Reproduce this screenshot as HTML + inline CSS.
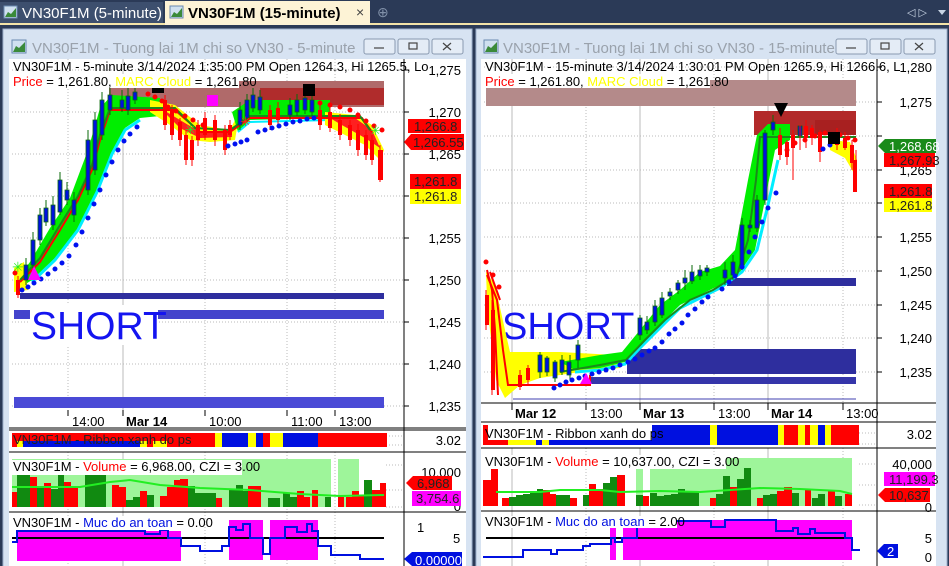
<!DOCTYPE html>
<html><head><meta charset="utf-8"><style>
html,body{margin:0;padding:0;width:949px;height:566px;overflow:hidden;background:#2b3a57}
svg{display:block}
text{font-family:"Liberation Sans",sans-serif;font-size:13px;fill:#000}
</style></head><body>
<svg width="949" height="566" viewBox="0 0 949 566" xmlns="http://www.w3.org/2000/svg">
<!-- tab bar -->
<rect x="0" y="0" width="949" height="29" fill="#2b3a57"/>
<rect x="0" y="23" width="949" height="2" fill="#f3e3a8"/>
<rect x="0" y="2" width="163" height="21" fill="#3d4f6e"/>
<rect x="165" y="1" width="205" height="24" fill="#fdf3d6"/>
<g><rect x="4" y="6" width="13" height="12" fill="#cfe0f0" stroke="#6a8ab0"/><path d="M5 17 L8 12 L11 14 L16 8 V17Z" fill="#3a8a3a"/></g>
<text x="22" y="18" style="font-size:15px;fill:#fff">VN30F1M (5-minute)</text>
<g><rect x="170" y="6" width="13" height="12" fill="#cfe0f0" stroke="#6a8ab0"/><path d="M171 17 L174 12 L177 14 L182 8 V17Z" fill="#3a8a3a"/></g>
<text x="188" y="18" style="font-size:15px;font-weight:bold">VN30F1M (15-minute)</text>
<text x="356" y="17" style="font-size:14px;fill:#444">×</text>
<text x="377" y="17" style="font-size:14px;fill:#8090a8">⊕</text>
<text x="907" y="16" style="font-size:11px;fill:#c8d4e4">◁ ▷</text>
<path d="M938 10 h8 l-4 5z" fill="#c8d4e4"/>

<!-- windows -->
<rect x="3" y="29" width="469" height="540" fill="#d7e3f2" stroke="#9fb2cc"/>
<rect x="476" y="29" width="471" height="540" fill="#d7e3f2" stroke="#9fb2cc"/>
<g><rect x="12" y="40" width="14" height="13" fill="#cfe0f0" stroke="#6a8ab0"/><path d="M13 52 L16 46 L19 48 L25 42 V52Z" fill="#3a8a3a"/></g>
<text x="32" y="53" style="font-size:15px;fill:#9aa2ac">VN30F1M - Tuong lai 1M chi so VN30 - 5-minute</text>
<g><rect x="484" y="40" width="14" height="13" fill="#cfe0f0" stroke="#6a8ab0"/><path d="M485 52 L488 46 L491 48 L497 42 V52Z" fill="#3a8a3a"/></g>
<text x="503" y="53" style="font-size:15px;fill:#9aa2ac">VN30F1M - Tuong lai 1M chi so VN30 - 15-minute</text>
<g fill="#e4ecf6" stroke="#8a9ab0">
<rect x="364" y="39" width="31" height="15" rx="2"/><rect x="398" y="39" width="31" height="15" rx="2"/><rect x="432" y="39" width="31" height="15" rx="2"/>
<rect x="836" y="39" width="31" height="15" rx="2"/><rect x="870" y="39" width="31" height="15" rx="2"/><rect x="904" y="39" width="31" height="15" rx="2"/>
</g>
<g stroke="#444" fill="none" stroke-width="1.2">
<path d="M374 48 h10"/><rect x="409" y="43" width="8" height="6"/><path d="M443 43 l8 7 M451 43 l-8 7"/>
<path d="M846 48 h10"/><rect x="881" y="43" width="8" height="6"/><path d="M915 43 l8 7 M923 43 l-8 7"/>
</g>

<!-- ===== LEFT CHART ===== -->
<rect x="9" y="59" width="457" height="507" fill="#fff"/>
<g stroke="#bbb" stroke-dasharray="1,2">
<path d="M12 70H404 M12 112H404 M12 154H404 M12 196H404 M12 238H404 M12 280H404 M12 322H404 M12 364H404 M12 406H404"/>
<path d="M68 59V410 M205 59V410 M287 59V410 M335 59V410"/>
<path d="M68 452V566 M205 452V566 M287 452V566 M335 452V566 M386 465H404 M386 490H404 M386 507H404 M386 436H404 M386 445H404"/>
</g>
<path d="M123 59V410 M123 452V566" stroke="#bbb"/>
<rect x="109" y="81" width="275" height="26" fill="#b06a6a"/>
<rect x="260" y="88" width="124" height="17" fill="#b02c2c"/>
<rect x="20" y="293" width="364" height="6" fill="#2e2e9e"/>
<rect x="14" y="310" width="370" height="9" fill="#4444cc"/>
<rect x="14" y="397" width="370" height="11" fill="#4a4ad6"/>
<rect x="30" y="305" width="128" height="40" fill="#fff"/>
<text x="31" y="339" style="font-size:39px;fill:#1414f0">SHORT</text>
<!-- clouds -->
<polygon points="14,283 30,262 50,228 70,198 88,150 100,108 112,95 160,98 160,116 140,118 125,128 112,152 97,190 78,228 55,258 32,280 16,290" fill="#00ee00"/>
<polyline points="32,282 55,260 78,230 97,192 112,154 125,130 140,120" fill="none" stroke="#00eeff" stroke-width="3"/>
<polygon points="150,100 175,105 200,125 230,130 240,110 235,140 210,142 190,140 170,125 150,112" fill="#ffff00"/>
<polygon points="160,108 180,120 200,132 232,132 232,137 200,138 180,128" fill="#ff2020"/>
<polygon points="232,112 250,100 330,100 330,118 250,120 238,132" fill="#00ee00"/>
<polyline points="238,132 250,122 330,120" fill="none" stroke="#00eeff" stroke-width="2"/>
<polygon points="325,112 355,115 372,125 384,150 380,160 365,145 345,135 325,125" fill="#ffff00"/>
<polygon points="325,115 355,118 372,130 380,148 365,138 340,124" fill="#ff2020"/>
<polygon points="14,268 24,262 28,290 14,292" fill="#ffff00"/>
<!-- MA lines -->
<polyline points="20,282 40,262 60,230 78,200 92,170 100,140 110,110 175,110 200,132 230,132 250,118 362,118 372,132" fill="none" stroke="#ff0000" stroke-width="2"/>
<polyline points="20,280 40,258 60,225 78,196 92,165 100,135 110,108 175,108 195,128 230,130 250,116 360,116 370,130" fill="none" stroke="#1a8a1a" stroke-width="2"/>
<!-- wicks -->
<g stroke="#0a6a0a"><path d="M26 258V285 M33 232V268 M40 208V245 M46 200V226 M53 196V230 M60 172V215 M67 182V205 M74 192V222 M88 130V195 M95 112V175 M102 92V140 M110 88V115 M122 90V112 M128 86V115 M135 86V104 M240 102V130 M247 94V122 M253 88V112 M260 90V114 M290 98V120 M297 94V116 M305 86V114 M312 92V116"/></g>
<g stroke="#ff0000"><path d="M18 276V298 M165 95V130 M172 105V140 M180 118V146 M186 130V165 M192 136V166 M198 120V146 M205 112V140 M215 115V146 M225 125V155 M230 120V140 M270 105V130 M278 102V126 M320 104V130 M330 106V132 M340 114V140 M350 120V146 M358 124V156 M366 130V160 M372 135V165 M380 145V182"/></g>
<path d="M24 265h4v15h-4z M31 240h4v25h-4z M38 215h4v25h-4z M44 208h4v14h-4z M51 205h4v20h-4z M58 180h4v32h-4z M65 190h4v10h-4z M72 200h4v15h-4z M86 140h4v50h-4z M93 120h4v50h-4z M100 100h4v35h-4z M108 95h4v15h-4z M120 100h4v8h-4z M126 96h4v14h-4z M133 92h4v8h-4z M238 110h4v15h-4z M245 100h4v18h-4z M251 95h4v13h-4z M258 97h4v13h-4z M288 105h4v10h-4z M295 100h4v12h-4z M303 98h4v12h-4z M310 100h4v12h-4z" fill="#0010e0" stroke="#0a6a0a" stroke-width="0.8"/>
<path d="M16 280h4v15h-4z M163 100h4v25h-4z M170 110h4v25h-4z M178 122h4v18h-4z M184 135h4v25h-4z M190 140h4v20h-4z M196 125h4v15h-4z M203 118h4v17h-4z M213 120h4v20h-4z M223 130h4v20h-4z M228 125h4v10h-4z M268 110h4v15h-4z M276 108h4v12h-4z M318 110h4v15h-4z M328 112h4v16h-4z M338 120h4v15h-4z M348 125h4v15h-4z M356 130h4v20h-4z M364 135h4v20h-4z M370 140h4v20h-4z M378 150h5v30h-5z" fill="#ff0000"/>
<!-- SAR dots -->
<path d="M22 290h0 M28 287h0 M34 283h0 M41 279h0 M48 274h0 M55 269h0 M62 263h0 M69 256h0 M76 245h0 M82 232h0 M88 218h0 M94 204h0 M100 190h0 M106 175h0 M112 162h0 M118 150h0 M124 141h0 M130 134h0 M137 127h0 M228 146h0 M235 144h0 M241 142h0 M247 140h0 M258 132h0 M265 130h0 M272 128h0 M279 126h0 M286 124h0 M293 122h0 M300 121h0 M307 119h0 M314 118h0" stroke="#0010f0" stroke-width="5" stroke-linecap="round"/>
<path d="M15 273h0 M148 94h0 M155 97h0 M162 101h0 M168 107h0 M176 111h0 M185 116h0 M193 120h0 M203 125h0 M320 103h0 M330 105h0 M340 107h0 M350 110h0 M358 115h0 M366 121h0 M374 126h0 M382 130h0" stroke="#ff0000" stroke-width="5" stroke-linecap="round"/>
<rect x="152" y="84" width="12" height="9" fill="#000"/>
<rect x="303" y="84" width="12" height="12" fill="#000"/>
<rect x="207" y="95" width="11" height="11" fill="#ff00ff"/>
<polygon points="34,266 28,280 41,280" fill="#ff00ff"/>
<text x="12" y="272" style="font-size:14px;fill:#22ee22">✳</text>
<text x="185" y="134" style="font-size:13px;fill:#22ee22">✳</text>
<text x="240" y="126" style="font-size:13px;fill:#ff2020">✳</text>
<text x="370" y="135" style="font-size:13px;fill:#22ee22">✳</text>
<!-- header -->
<rect x="10" y="60" width="394" height="30" fill="#fff" opacity="0"/>
<text x="13" y="71">VN30F1M - 5-minute 3/14/2024 1:35:00 PM Open 1264.3, Hi 1265.5, Lo</text>
<rect x="12" y="74" width="227" height="14" fill="#fff"/>
<text x="13" y="86"><tspan fill="#ff0000">Price</tspan> = 1,261.80, <tspan fill="#ffff00">MARC Cloud</tspan> = 1,261.80</text>
<!-- axis -->
<path d="M404 59V566 M9 428H466 M9 430H466 M9 452H466 M9 512H466" stroke="#000"/>
<g stroke="#000"><path d="M404 70h5 M404 112h5 M404 154h5 M404 196h5 M404 238h5 M404 280h5 M404 322h5 M404 364h5 M404 406h5 M68 410v6 M123 410v6 M205 410v6 M287 410v6 M335 410v6"/></g>
<g text-anchor="end"><text x="461" y="75">1,275</text><text x="461" y="117">1,270</text><text x="461" y="159">1,265</text><text x="461" y="243">1,255</text><text x="461" y="285">1,250</text><text x="461" y="327">1,245</text><text x="461" y="369">1,240</text><text x="461" y="411">1,235</text></g>
<rect x="408" y="119" width="53" height="14" fill="#ff0000"/><text x="414" y="131" style="fill:#222">1,266.8</text>
<polygon points="404,142 411,134 464,134 464,150 411,150" fill="#ff0000"/><text x="413" y="147" style="fill:#222">1,266.55</text>
<rect x="410" y="174" width="51" height="15" fill="#ff0000"/><text x="414" y="186" style="fill:#222">1,261.8</text>
<rect x="410" y="189" width="51" height="15" fill="#ffff00"/><text x="414" y="201" style="fill:#222">1,261.8</text>
<text x="72" y="426">14:00</text><text x="126" y="426" style="font-weight:bold">Mar 14</text><text x="209" y="426">10:00</text><text x="291" y="426">11:00</text><text x="339" y="426">13:00</text>
<!-- ribbon -->
<rect x="180" y="433" width="35" height="14" fill="#ff0000"/><rect x="215" y="433" width="7" height="14" fill="#ffff00"/><rect x="222" y="433" width="26" height="14" fill="#0010e0"/><rect x="248" y="433" width="8" height="14" fill="#ffff00"/><rect x="256" y="433" width="7" height="14" fill="#0010e0"/><rect x="263" y="433" width="7" height="14" fill="#ff0000"/><rect x="270" y="433" width="13" height="14" fill="#ffff00"/><rect x="283" y="433" width="35" height="14" fill="#0010e0"/><rect x="318" y="433" width="69" height="14" fill="#ff0000"/>
<rect x="12" y="433" width="168" height="8" fill="#ff0000"/>
<rect x="12" y="441" width="5" height="6" fill="#ff0000"/><rect x="17" y="441" width="6" height="6" fill="#ffff00"/><rect x="23" y="441" width="117" height="6" fill="#0010e0"/><rect x="140" y="441" width="7" height="6" fill="#ffff00"/><rect x="147" y="441" width="6" height="6" fill="#ff0000"/><rect x="153" y="441" width="14" height="6" fill="#ffff00"/><rect x="167" y="441" width="13" height="6" fill="#ff0000"/>
<text x="13" y="444" style="fill:#222">VN30F1M - Ribbon xanh do ps</text>
<text x="461" y="445" text-anchor="end">3.02</text>
<!-- volume -->
<rect x="12" y="459" width="319" height="48" fill="#9ef59a"/><rect x="338" y="459" width="21" height="48" fill="#9ef59a"/>
<g fill="#ff0000"><rect x="12" y="492" width="5" height="15"/><rect x="30" y="477" width="7" height="30"/><rect x="44" y="483" width="7" height="24"/><rect x="64" y="482" width="7" height="25"/><rect x="71" y="486" width="7" height="21"/><rect x="112" y="485" width="7" height="22"/><rect x="119" y="487" width="7" height="20"/><rect x="140" y="491" width="7" height="16"/><rect x="160" y="496" width="7" height="11"/><rect x="167" y="487" width="7" height="20"/><rect x="174" y="480" width="6" height="27"/><rect x="180" y="479" width="8" height="28"/><rect x="216" y="498" width="6" height="9"/><rect x="248" y="486" width="6" height="21"/><rect x="254" y="486" width="7" height="21"/><rect x="297" y="491" width="7" height="16"/><rect x="304" y="497" width="6" height="10"/><rect x="312" y="490" width="6" height="17"/><rect x="338" y="497" width="6" height="10"/><rect x="346" y="497" width="6" height="10"/><rect x="352" y="491" width="7" height="16"/><rect x="359" y="496" width="5" height="11"/><rect x="372" y="490" width="8" height="17"/><rect x="380" y="483" width="6" height="24"/></g>
<g fill="#118a11"><rect x="17" y="472" width="6" height="35"/><rect x="23" y="473" width="7" height="34"/><rect x="37" y="487" width="7" height="20"/><rect x="51" y="489" width="7" height="18"/><rect x="58" y="469" width="6" height="38"/><rect x="85" y="469" width="7" height="38"/><rect x="92" y="469" width="7" height="38"/><rect x="99" y="469" width="7" height="38"/><rect x="126" y="500" width="7" height="7"/><rect x="133" y="497" width="7" height="10"/><rect x="147" y="495" width="7" height="12"/><rect x="188" y="486" width="7" height="21"/><rect x="195" y="493" width="7" height="14"/><rect x="202" y="493" width="7" height="14"/><rect x="209" y="493" width="7" height="14"/><rect x="229" y="490" width="7" height="17"/><rect x="236" y="485" width="7" height="22"/><rect x="243" y="491" width="5" height="16"/><rect x="268" y="498" width="6" height="9"/><rect x="274" y="498" width="6" height="9"/><rect x="283" y="493" width="7" height="14"/><rect x="290" y="497" width="7" height="10"/><rect x="325" y="497" width="6" height="10"/><rect x="364" y="480" width="8" height="27"/></g>
<polyline points="12,487 80,487 110,482 130,480 160,485 200,488 250,490 300,494 340,496 384,495" fill="none" stroke="#22ee22" stroke-width="2"/>
<rect x="12" y="460" width="230" height="15" fill="#fff"/>
<text x="13" y="471">VN30F1M - <tspan fill="#ff0000">Volume</tspan> = 6,968.00, CZI = 3.00</text>
<text x="461" y="477" text-anchor="end">10,000</text><text x="461" y="511" text-anchor="end">0</text>
<polygon points="406,483 413,476 452,476 452,490 413,490" fill="#ff0000"/><text x="417" y="488" style="fill:#222">6,968</text>
<rect x="412" y="491" width="49" height="15" fill="#ff00ff"/><text x="416" y="503" style="fill:#222">3,754.6</text>
<!-- muc do -->
<rect x="17" y="531" width="164" height="30" fill="#ff00ff"/><rect x="229" y="520" width="34" height="40" fill="#ff00ff"/><rect x="270" y="520" width="48" height="40" fill="#ff00ff"/>
<path d="M12 538H384" stroke="#000" stroke-width="2"/>
<polyline points="12,542 17,542 17,531 145,531 145,534 160,534 160,530 168,530 168,538 181,538 181,546 200,546 200,551 222,551 222,546 229,546 229,527 236,527 236,530 243,530 243,524 250,524 250,538 263,538 263,554 270,554 270,538 285,538 285,527 297,527 297,532 307,532 307,524 312,524 312,531 318,531 318,546 331,546 331,555 360,555 360,559 384,559" fill="none" stroke="#0010e0" stroke-width="2"/>
<rect x="12" y="516" width="184" height="14" fill="#fff"/>
<text x="13" y="527">VN30F1M - <tspan fill="#0010e0">Muc do an toan</tspan> = 0.00</text>
<text x="417" y="532">1</text><text x="453" y="543">5</text>
<polygon points="404,559 412,552 462,552 462,566 412,566" fill="#0010e0"/><text x="415" y="565" style="fill:#fff">0.00000</text>

<!-- ===== RIGHT CHART ===== -->
<rect x="481" y="59" width="455" height="507" fill="#fff"/>
<g stroke="#bbb" stroke-dasharray="1,2">
<path d="M484 67H877 M484 102H877 M484 136H877 M484 170H877 M484 203H877 M484 237H877 M484 271H877 M484 305H877 M484 338H877 M484 372H877"/>
<path d="M586 59V403 M714 59V403 M843 59V403 M586 448V566 M714 448V566 M843 448V566 M859 464H877 M859 485H877 M859 505H877 M859 433H877 M859 444H877"/>
</g>
<path d="M512 59V403 M640 59V403 M768 59V403 M512 448V566 M640 448V566 M768 448V566" stroke="#bbb"/>
<rect x="486" y="80" width="370" height="26" fill="#b48a8a"/>
<rect x="754" y="111" width="102" height="24" fill="#b22a2a"/>
<rect x="815" y="120" width="41" height="15" fill="#a82020"/>
<rect x="727" y="278" width="129" height="8" fill="#2e2e9e"/>
<rect x="627" y="349" width="229" height="25" fill="#2e2e9e"/>
<rect x="590" y="377" width="266" height="7" fill="#3535aa"/>
<path d="M513 399H856" stroke="#4040b0"/>
<text x="502" y="339" style="font-size:38px;fill:#1414f0">SHORT</text>
<polygon points="486,272 495,285 505,330 510,352 560,352 615,355 620,368 580,372 540,378 520,385 505,398 496,380 490,330 487,300" fill="#ffff00"/>
<path d="M487 275 L497 300 L503 350 L508 385 L522 385 L590 385 L590 375 M487 270 L492 290 L495 330 L498 395 M490 272 L500 300" fill="none" stroke="#ff0000" stroke-width="2"/>
<polygon points="560,362 600,355 622,352 640,330 660,305 680,290 700,272 720,266 735,250 748,180 757,135 768,124 790,124 790,140 775,150 765,200 755,250 740,272 720,285 700,295 680,305 660,325 640,345 625,362 600,368 575,370" fill="#00ee00"/>
<polyline points="575,372 600,370 625,364 640,348 660,328 680,308 700,298 720,288 742,272 757,250 768,205 778,160" fill="none" stroke="#00eeff" stroke-width="3"/>
<polyline points="560,372 600,365 626,360 645,340 665,320 690,300 713,290 737,275 748,240 756,180 760,137 856,137" fill="none" stroke="#1a8a1a" stroke-width="2"/>
<polygon points="830,140 850,142 857,160 855,175 845,158 830,150" fill="#ffff00"/>
<g stroke="#0a6a0a"><path d="M540 352V378 M547 356V376 M555 360V382 M562 355V375 M570 355V380 M578 340V368 M640 315V340 M647 316V334 M655 300V326 M662 292V318 M670 288V300 M678 280V294 M685 270V290 M692 265V284 M700 265V280 M707 265V276 M725 262V285 M733 255V280 M742 218V270 M750 220V232 M757 195V232 M765 130V205 M773 115V135"/></g>
<path d="M538 355h4v17h-4z M545 358h4v14h-4z M553 362h4v16h-4z M560 360h4v12h-4z M567 362h4v13h-4z M576 345h4v15h-4z M638 318h4v17h-4z M645 322h4v8h-4z M653 306h4v16h-4z M660 298h4v17h-4z M668 292h4v4h-4z M676 283h4v7h-4z M683 278h4v5h-4z M690 272h4v9h-4z M698 270h4v6h-4z M705 268h4v4h-4z M723 270h4v8h-4z M731 262h4v13h-4z M740 225h4v42h-4z M748 225h4v3h-4z M755 200h4v28h-4z M763 133h4v67h-4z M771 122h4v8h-4z M798 126h4v10h-4z" fill="#0010e0" stroke="#0a6a0a" stroke-width="0.8"/>
<g stroke="#ff0000"><path d="M486 290V330 M492 300V395 M520 370V390 M528 365V385 M780 128V160 M787 140V165 M793 130V180 M800 125V150 M806 120V148 M812 125V145 M820 130V162 M837 128V150 M845 132V150 M852 140V170 M856 150V192"/></g>
<path d="M485 295h4v30h-4z M491 310h4v80h-4z M518 375h4v12h-4z M526 368h4v12h-4z M778 135h4v20h-4z M785 142h4v15h-4z M791 135h4v13h-4z M804 126h4v12h-4z M810 128h4v10h-4z M818 132h4v20h-4z M835 135h4v10h-4z M843 138h4v10h-4z M850 145h4v18h-4z M853 160h4v32h-4z" fill="#ff0000"/>
<path d="M554 388h0 M560 385h0 M566 382h0 M572 380h0 M579 378h0 M585 376h0 M592 374h0 M599 372h0 M606 370h0 M613 368h0 M620 365h0 M628 362h0 M635 359h0 M642 355h0 M649 351h0 M655 348h0 M662 342h0 M669 334h0 M675 329h0 M682 323h0 M688 315h0 M695 309h0 M702 302h0 M708 297h0 M722 289h0 M729 282h0 M735 276h0 M742 267h0 M749 252h0 M755 237h0 M762 222h0 M768 208h0 M776 193h0 M823 149h0 M830 145h0" stroke="#0010f0" stroke-width="5" stroke-linecap="round"/>
<path d="M486 262h0 M493 275h0 M499 287h0 M787 150h0 M795 143h0 M805 140h0 M815 136h0 M825 133h0 M840 135h0 M848 138h0 M855 140h0" stroke="#ff0000" stroke-width="5" stroke-linecap="round"/>
<polygon points="774,103 788,103 781,117" fill="#000"/>
<rect x="828" y="132" width="12" height="12" fill="#000"/>
<polygon points="586,373 580,384 592,384" fill="#ff00ff"/>
<text x="485" y="71">VN30F1M - 15-minute 3/14/2024 1:30:01 PM Open 1265.9, Hi 1266.6, L</text>
<rect x="484" y="74" width="226" height="14" fill="#fff"/>
<text x="485" y="86"><tspan fill="#ff0000">Price</tspan> = 1,261.80, <tspan fill="#ffff00">MARC Cloud</tspan> = 1,261.80</text>
<path d="M877 59V566 M481 403H936 M481 422H936 M481 448H936 M481 511H936" stroke="#000"/>
<g stroke="#000"><path d="M877 67h5 M877 102h5 M877 136h5 M877 170h5 M877 203h5 M877 237h5 M877 271h5 M877 305h5 M877 338h5 M877 372h5 M512 403v7 M586 403v7 M640 403v7 M714 403v7 M768 403v7 M843 403v7"/></g>
<g text-anchor="end"><text x="932" y="72">1,280</text><text x="932" y="107">1,275</text><text x="932" y="175">1,265</text><text x="932" y="242">1,255</text><text x="932" y="276">1,250</text><text x="932" y="310">1,245</text><text x="932" y="343">1,240</text><text x="932" y="377">1,235</text></g>
<polygon points="878,146 885,139 936,139 936,153 885,153" fill="#1a8a1a"/><text x="889" y="151" style="fill:#fff">1,268.68</text>
<rect x="884" y="153" width="51" height="14" fill="#ff0000"/><text x="889" y="165" style="fill:#222">1,267.93</text>
<rect x="884" y="184" width="48" height="14" fill="#ff0000"/><text x="889" y="196" style="fill:#222">1,261.8</text>
<rect x="884" y="198" width="48" height="14" fill="#ffff00"/><text x="889" y="210" style="fill:#222">1,261.8</text>
<text x="515" y="418" style="font-weight:bold">Mar 12</text><text x="590" y="418">13:00</text><text x="643" y="418" style="font-weight:bold">Mar 13</text><text x="718" y="418">13:00</text><text x="771" y="418" style="font-weight:bold">Mar 14</text><text x="846" y="418">13:00</text>
<!-- ribbon R -->
<rect x="652" y="425" width="58" height="20" fill="#0010e0"/><rect x="710" y="425" width="7" height="20" fill="#ffff00"/><rect x="717" y="425" width="61" height="20" fill="#0010e0"/><rect x="778" y="425" width="6" height="20" fill="#ffff00"/><rect x="784" y="425" width="14" height="20" fill="#ff0000"/><rect x="798" y="425" width="7" height="20" fill="#ffff00"/><rect x="805" y="425" width="5" height="20" fill="#ff0000"/><rect x="810" y="425" width="8" height="20" fill="#ffff00"/><rect x="818" y="425" width="7" height="20" fill="#0010e0"/><rect x="825" y="425" width="6" height="20" fill="#ffff00"/><rect x="831" y="425" width="28" height="20" fill="#ff0000"/>
<rect x="483" y="425" width="169" height="20" fill="#fff"/>
<rect x="483" y="440" width="25" height="5" fill="#ff0000"/><rect x="508" y="440" width="28" height="5" fill="#ffff00"/><rect x="536" y="440" width="6" height="5" fill="#0010e0"/><rect x="542" y="440" width="7" height="5" fill="#ffff00"/><rect x="549" y="440" width="103" height="5" fill="#0010e0"/>
<rect x="483" y="425" width="5" height="15" fill="#ff0000"/>
<text x="485" y="438">VN30F1M - Ribbon xanh do ps</text>
<text x="932" y="439" text-anchor="end">3.02</text>
<!-- volume R -->
<rect x="636" y="458" width="7" height="48" fill="#9ef59a"/><rect x="650" y="458" width="202" height="48" fill="#9ef59a"/>
<g fill="#ff0000"><rect x="483" y="480" width="8" height="26"/><rect x="491" y="468" width="7" height="38"/><rect x="502" y="498" width="7" height="8"/><rect x="543" y="490" width="7" height="16"/><rect x="550" y="494" width="6" height="12"/><rect x="570" y="498" width="7" height="8"/><rect x="589" y="484" width="7" height="22"/><rect x="596" y="489" width="7" height="17"/><rect x="617" y="475" width="8" height="31"/><rect x="643" y="496" width="6" height="10"/><rect x="710" y="498" width="6" height="8"/><rect x="730" y="487" width="7" height="19"/><rect x="757" y="498" width="6" height="8"/><rect x="777" y="491" width="7" height="15"/><rect x="784" y="487" width="8" height="19"/><rect x="805" y="489" width="6" height="17"/><rect x="828" y="490" width="7" height="16"/><rect x="845" y="494" width="7" height="12"/></g>
<g fill="#118a11"><rect x="509" y="497" width="7" height="9"/><rect x="516" y="495" width="7" height="11"/><rect x="523" y="494" width="7" height="12"/><rect x="530" y="493" width="7" height="13"/><rect x="537" y="489" width="6" height="17"/><rect x="556" y="495" width="7" height="11"/><rect x="563" y="495" width="7" height="11"/><rect x="583" y="495" width="6" height="11"/><rect x="603" y="483" width="7" height="23"/><rect x="610" y="477" width="7" height="29"/><rect x="636" y="495" width="7" height="11"/><rect x="650" y="493" width="7" height="13"/><rect x="657" y="496" width="7" height="10"/><rect x="664" y="495" width="7" height="11"/><rect x="671" y="494" width="7" height="12"/><rect x="678" y="489" width="7" height="17"/><rect x="685" y="491" width="7" height="15"/><rect x="692" y="492" width="7" height="14"/><rect x="716" y="494" width="7" height="12"/><rect x="723" y="476" width="7" height="30"/><rect x="737" y="479" width="7" height="27"/><rect x="744" y="468" width="7" height="38"/><rect x="763" y="495" width="7" height="11"/><rect x="770" y="494" width="7" height="12"/><rect x="792" y="493" width="7" height="13"/><rect x="812" y="498" width="6" height="8"/><rect x="818" y="494" width="7" height="12"/><rect x="835" y="496" width="7" height="10"/></g>
<polyline points="496,492 540,492 560,490 600,490 620,492 660,491 700,492 760,488 800,489 840,491 852,494" fill="none" stroke="#22ee22" stroke-width="2"/>
<rect x="483" y="455" width="243" height="14" fill="#fff"/>
<text x="485" y="466">VN30F1M - <tspan fill="#ff0000">Volume</tspan> = 10,637.00, CZI = 3.00</text>
<text x="932" y="469" text-anchor="end">40,000</text><text x="932" y="512" text-anchor="end">0</text>
<rect x="884" y="472" width="51" height="14" fill="#ff00ff"/><text x="889" y="484" style="fill:#222">11,199.3</text>
<polygon points="878,495 885,488 930,488 930,502 885,502" fill="#ff0000"/><text x="889" y="500" style="fill:#222">10,637</text>
<!-- muc do R -->
<rect x="610" y="528" width="6" height="32" fill="#ff00ff"/><rect x="623" y="520" width="229" height="40" fill="#ff00ff"/>
<path d="M486 538H846" stroke="#000" stroke-width="2"/>
<polyline points="483,557 523,557 523,550 551,550 551,554 557,554 557,550 583,550 583,546 590,546 590,544 611,544 611,538 615,538 615,542 622,542 622,538 637,538 637,521 711,521 711,527 725,527 725,520 776,520 776,531 793,531 793,528 798,528 798,534 810,534 810,529 815,529 815,533 845,533 845,538 852,538 852,550 860,550" fill="none" stroke="#0010e0" stroke-width="2"/>
<rect x="483" y="516" width="194" height="12" fill="#fff"/>
<text x="485" y="526">VN30F1M - <tspan fill="#0010e0">Muc do an toan</tspan> = 2.00</text>
<text x="932" y="543" text-anchor="end">5</text><text x="932" y="562" text-anchor="end">0</text>
<polygon points="877,551 884,544 898,544 898,558 884,558" fill="#0010e0"/><text x="887" y="556" style="fill:#fff">2</text>
</svg>
</body></html>
